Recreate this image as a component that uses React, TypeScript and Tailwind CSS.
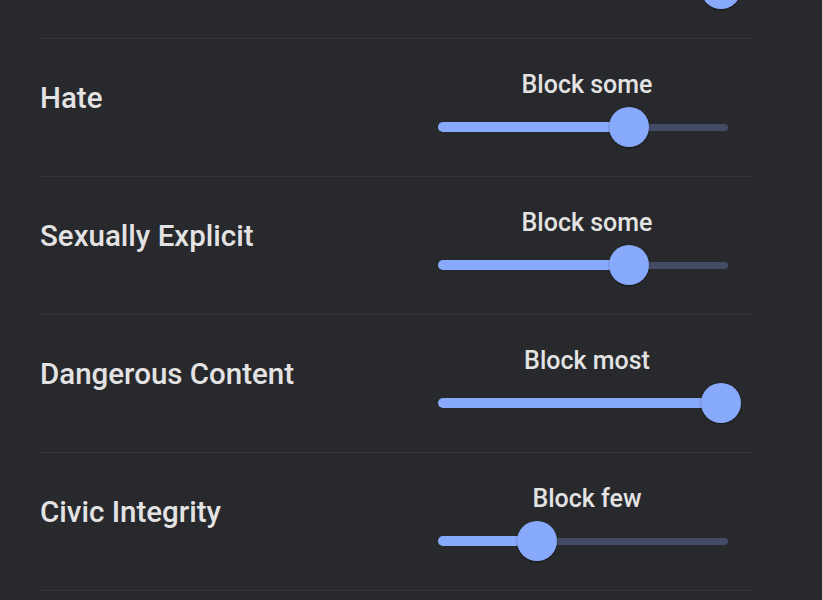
const levels = ["Block none", "Block few", "Block some", "Block most"];

interface Setting {
  name: string;
  value: number;
}

const settings: Setting[] = [
  { name: "Hate", value: 2 },
  { name: "Sexually Explicit", value: 2 },
  { name: "Dangerous Content", value: 3 },
  { name: "Civic Integrity", value: 1 },
];

function SafetySlider({ value, showLabel = true }: { value: number; showLabel?: boolean }) {
  // thumb centre runs from 7px to 283px across the 290px track
  const pos = 7 + (value / 3) * 276;
  return (
    <div className="flex w-[290px] flex-col">
      <div className="h-[25px] pl-[8px] text-center text-[25px] font-medium leading-[25px] text-[#e3e3e3]">
        {showLabel ? levels[value] : null}
      </div>
      <div className="relative mt-[10px] flex h-[40px] items-center">
        <div className="h-[7px] w-full rounded-full bg-[#434c64]" />
        <div
          className="absolute left-0 h-[10px] rounded-full bg-[#88aafc]"
          style={{ width: pos }}
        />
        <div
          className="absolute top-0 h-[40px] w-[40px] -translate-x-1/2 rounded-full bg-[#88aafc] shadow-[0_1px_2px_rgba(0,0,0,0.45)]"
          style={{ left: pos }}
        />
      </div>
    </div>
  );
}

export default function App() {
  return (
    <div
      className="h-[600px] w-full overflow-hidden bg-[#28292d]"
      style={{ fontFamily: "Roboto, 'Noto Sans', sans-serif" }}
    >
      <div className="-mt-[99px] ml-[40px] w-[712px]">
        {/* previous row, scrolled mostly out of view */}
        <div className="flex h-[138px] items-start justify-end border-b border-[#35363a]">
          <div className="mt-[33px] mr-[24px]">
            <SafetySlider value={3} showLabel={false} />
          </div>
        </div>
        {settings.map((s) => (
          <div
            key={s.name}
            className="flex h-[138px] items-start justify-between border-b border-[#35363a]"
          >
            <div className="mt-[44px] text-[29.5px] font-medium leading-[30px] text-[#e3e3e3]">
              {s.name}
            </div>
            <div className="mt-[33px] mr-[24px]">
              <SafetySlider value={s.value} />
            </div>
          </div>
        ))}
      </div>
    </div>
  );
}
